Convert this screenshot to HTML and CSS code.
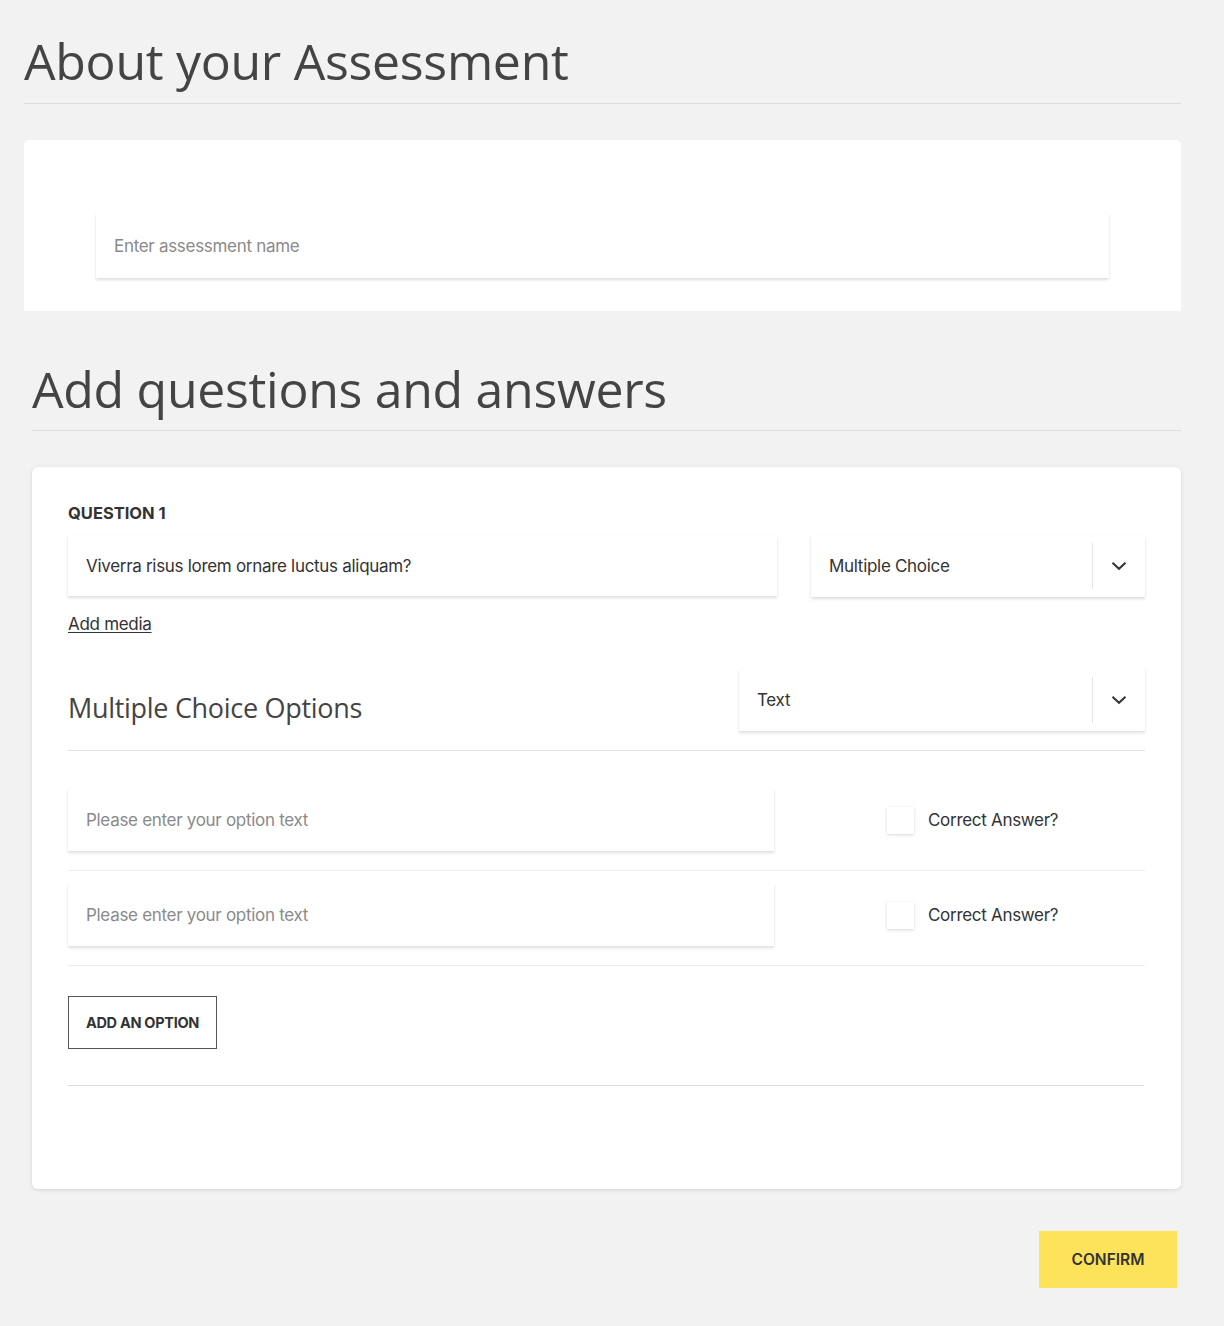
FILE: index.html
```html
<!DOCTYPE html>
<html>
<head>
<meta charset="utf-8">
<link rel="stylesheet" href="styles.css">
</head>
<body>
<div class="page">
  <section class="about">
    <h1 class="heading heading-a">About your Assessment</h1>
    <div class="card card-about">
      <div class="field field-name"><span class="placeholder">Enter assessment name</span></div>
    </div>
  </section>

  <section class="questions">
    <h1 class="heading heading-q">Add questions and answers</h1>
    <div class="card card-q">
      <div class="q-label">QUESTION 1</div>
      <div class="q-row">
        <div class="field field-question"><span class="value">Viverra risus lorem ornare luctus aliquam?</span></div>
        <div class="field select select-type">
          <span class="value">Multiple Choice</span>
          <span class="select-arrow"><svg width="16" height="10" viewBox="0 0 16 10"><path d="M1.5 1.8 L8 7.8 L14.5 1.8" fill="none" stroke="#333" stroke-width="2"/></svg></span>
        </div>
      </div>
      <a class="add-media" href="#">Add media</a>

      <div class="mc-head">
        <h2 class="mc-title">Multiple Choice Options</h2>
        <div class="field select select-format">
          <span class="value">Text</span>
          <span class="select-arrow"><svg width="16" height="10" viewBox="0 0 16 10"><path d="M1.5 1.8 L8 7.8 L14.5 1.8" fill="none" stroke="#333" stroke-width="2"/></svg></span>
        </div>
      </div>

      <div class="option">
        <div class="field field-option"><span class="placeholder">Please enter your option text</span></div>
        <label class="correct"><span class="checkbox"></span><span>Correct Answer?</span></label>
      </div>
      <div class="option">
        <div class="field field-option"><span class="placeholder">Please enter your option text</span></div>
        <label class="correct"><span class="checkbox"></span><span>Correct Answer?</span></label>
      </div>

      <div class="add-row">
        <button class="btn-outline">ADD AN OPTION</button>
      </div>
    </div>
  </section>

  <div class="actions">
    <button class="btn-confirm">CONFIRM</button>
  </div>
</div>
</body>
</html>
```

FILE: styles.css
```css
* { box-sizing: border-box; }
html, body { margin: 0; padding: 0; }
body {
  background: #f2f2f2;
  font-family: "Inter", "Rubik", "Liberation Sans", sans-serif;
  color: #333;
}
.page {
  width: 1181px;
  padding: 0 0 37px 24px;
}
.heading {
  font-family: "Open Sans", "Noto Sans", sans-serif;
  font-weight: 400;
  font-size: 50px;
  line-height: 64px;
  color: #444;
  margin: 0;
  border-bottom: 1px solid #dcdcdc;
  letter-spacing: -0.3px;
}
.heading-a { padding-top: 29px; padding-bottom: 10px; }
.card {
  background: #fff;
}
.card-about {
  margin-top: 36px;
  height: 171px;
  border-radius: 5px 5px 0 0;
  padding: 73px 72px 0 72px;
}
.field {
  background: #fff;
  box-shadow: 0 2px 3px rgba(0,0,0,0.13), 0 0 1px rgba(0,0,0,0.06);
  display: flex;
  align-items: center;
  font-size: 17px;
  letter-spacing: -0.3px;
  padding-left: 18px;
}
.placeholder { color: #8a8a8a; }
.value { color: #333; }
.field-name { height: 65px; }

.questions { margin-left: 8px; margin-top: 46px; }
.heading-q { padding-bottom: 9px; }

.card-q {
  margin-top: 36px;
  border-radius: 6px;
  box-shadow: 0 1px 4px rgba(0,0,0,0.12);
  padding: 36px 36px 103px 36px;
}
.q-label {
  font-weight: 700;
  font-size: 16.5px;
  line-height: 20px;
  color: #333;
}
.q-row {
  display: flex;
  justify-content: space-between;
  margin-top: 12px;
}
.field-question { width: 709px; height: 61px; }
.select { position: relative; height: 62px; justify-content: space-between; padding-right: 0; }
.select-type { width: 334px; }
.select-arrow {
  width: 53px;
  height: 46px;
  border-left: 1px solid #e4e4e4;
  display: flex;
  align-items: center;
  justify-content: center;
}
.add-media {
  display: inline-block;
  margin-top: 17px;
  font-size: 17px;
  letter-spacing: -0.3px;
  color: #333;
  text-decoration: underline;
  text-underline-offset: 2px;
}
.mc-head {
  display: flex;
  justify-content: space-between;
  align-items: flex-start;
  margin-top: 35px;
  padding-bottom: 19px;
  border-bottom: 1px solid #e2e2e2;
}
.mc-title {
  margin: 0;
  margin-top: 22px;
  font-family: "Open Sans", "Noto Sans", sans-serif;
  font-weight: 400;
  font-size: 27px;
  line-height: 34px;
  letter-spacing: -0.3px;
  color: #444;
}
.select-format { width: 406px; }
.option {
  display: flex;
  align-items: center;
  padding: 38px 0 19px 0;
  border-bottom: 1px solid #ececec;
}
.option + .option { padding-top: 13px; }
.field-option { width: 706px; height: 62px; }
.correct {
  margin-left: 113px;
  display: flex;
  align-items: center;
  font-size: 17px;
  letter-spacing: -0.3px;
  color: #333;
}
.checkbox {
  width: 27px;
  height: 27px;
  background: #fff;
  box-shadow: 0 1px 3px rgba(0,0,0,0.16);
  margin-right: 14px;
}
.add-row {
  padding: 30px 0 36px 0;
  border-bottom: 1px solid #dcdcdc;
  margin-right: 1px;
}
.btn-outline {
  width: 149px;
  height: 53px;
  background: #fff;
  border: 1px solid #555;
  font-family: "Inter", "Liberation Sans", sans-serif;
  font-weight: 700;
  font-size: 14.5px;
  letter-spacing: -0.3px;
  color: #333;
  padding: 0;
}
.actions {
  display: flex;
  justify-content: flex-end;
  margin-top: 42px;
  padding-right: 4px;
}
.btn-confirm {
  width: 138px;
  height: 57px;
  background: #fde35a;
  border: 0;
  font-family: "Inter", "Liberation Sans", sans-serif;
  font-weight: 600;
  font-size: 15.5px;
  color: #333;
  padding: 0;
}
```
